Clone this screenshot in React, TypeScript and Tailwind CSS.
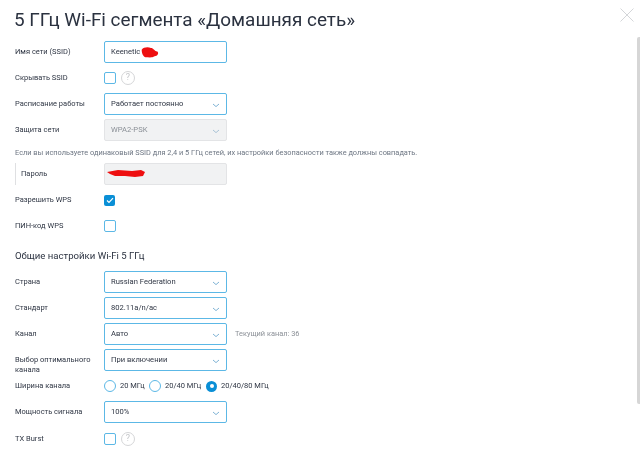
import React from "react";

const Label = ({ children, top }: { children: React.ReactNode; top?: boolean }) => (
  <div className={`w-[89px] shrink-0 text-[7.5px] leading-[10px] text-[#2f3644] ${top ? "self-start pt-[6px]" : ""}`}>{children}</div>
);

const Row = ({ label, children, top }: { label: React.ReactNode; children: React.ReactNode; top?: boolean }) => (
  <div className="flex h-[22px] items-center">
    <Label top={top}>{label}</Label>
    {children}
  </div>
);

const Chevron = ({ color = "#7fb3d5" }: { color?: string }) => (
  <svg width="8" height="5" viewBox="0 0 8 5" fill="none" className="absolute right-[6px] top-[9px]">
    <path d="M1 1l3 2.6L7 1" stroke={color} strokeWidth="1" />
  </svg>
);

const Select = ({ value, disabled }: { value: string; disabled?: boolean }) =>
  disabled ? (
    <div className="relative flex h-[22px] w-[123px] items-center rounded-[2px] border border-[#e3e4e6] bg-[#f1f2f3] pl-[6px] text-[7.6px] text-[#8b9097]">
      {value}
      <Chevron color="#a9c3d6" />
    </div>
  ) : (
    <div className="relative flex h-[22px] w-[123px] items-center rounded-[2px] border-[1.5px] border-[#5cb8e6] bg-white pl-[6px] text-[7.6px] text-[#2f3644]">
      {value}
      <Chevron />
    </div>
  );

const Box = ({ checked }: { checked?: boolean }) =>
  checked ? (
    <div className="flex h-[11px] w-[11px] items-center justify-center rounded-[2px] bg-[#0a8fd6]">
      <svg width="8" height="7" viewBox="0 0 8 7" fill="none">
        <path d="M1 3.5l2 2L7 1.2" stroke="#fff" strokeWidth="1.2" />
      </svg>
    </div>
  ) : (
    <div className="h-[12px] w-[12px] rounded-[2px] border border-[#5cb8e6] bg-white" />
  );

const Help = () => (
  <div className="ml-[5px] flex h-[14px] w-[14px] items-center justify-center rounded-full border border-[#d5d6d8] text-[9px] text-[#c4c6c9]">?</div>
);

const Radio = ({ label, on, w }: { label: string; on?: boolean; w: string }) => (
  <div className={`flex items-center gap-[4px] ${w}`}>
    {on ? (
      <div className="flex h-[11px] w-[11px] shrink-0 items-center justify-center rounded-full bg-[#0a8fd6]">
        <div className="h-[4px] w-[4px] rounded-full bg-white" />
      </div>
    ) : (
      <div className="h-[12px] w-[12px] shrink-0 rounded-full border border-[#5cb8e6] bg-white" />
    )}
    <span className="text-[7.5px] text-[#2f3644]">{label}</span>
  </div>
);

export default function App() {
  return (
    <div className="relative h-[472px] w-[640px] overflow-hidden bg-white pl-[15px] font-['Roboto',sans-serif] blur-[0.35px]">
      <h1 className="-ml-[1px] pt-[6px] text-[18.9px] leading-[27px] text-[#2b3240]">5 ГГц Wi-Fi сегмента «Домашняя сеть»</h1>

      <svg width="14" height="14" viewBox="0 0 14 14" fill="none" className="absolute left-[620px] top-[8px]">
        <path d="M0.5 0.5l13 13M13.5 0.5l-13 13" stroke="#d4d6d9" strokeWidth="1" />
      </svg>
      <div className="absolute left-[637px] top-[37px] h-[367px] w-[3px] rounded-l-[2px] bg-[#d6d6d6]" />

      <div className="mt-[8px] flex flex-col gap-[4px]">
        <Row label="Имя сети (SSID)">
          <div className="relative flex h-[22px] w-[123px] items-center rounded-[2px] border-[1.5px] border-[#5cb8e6] bg-white pl-[6px] text-[7.6px] text-[#2f3644]">
            Keenetic
            <svg width="20" height="12" viewBox="0 0 20 13" className="absolute left-[35px] top-[5px]">
              <path d="M1 3C3 0 8 0 11 1c3 0 3 3 7 4 2 2 0 5-3 5-3 2-7 1-10 1-3-1-4-5-4-8z" fill="#ee0f10" />
            </svg>
          </div>
        </Row>
        <Row label="Скрывать SSID">
          <Box />
          <Help />
        </Row>
        <Row label="Расписание работы">
          <Select value="Работает постоянно" />
        </Row>
        <Row label="Защита сети">
          <Select value="WPA2-PSK" disabled />
        </Row>
      </div>

      <p className="mt-[6px] h-[11px] text-[7.4px] leading-[11px] text-[#6d7683]">
        Если вы используете одинаковый SSID для 2,4 и 5 ГГц сетей, их настройки безопасности также должны совпадать.
      </p>

      <div className="mt-[5px] flex h-[22px] items-center border-l border-[#dfe0e2]">
        <div className="w-[88px] shrink-0 pl-[5px] text-[7.5px] text-[#2f3644]">Пароль</div>
        <div className="relative h-[22px] w-[123px] rounded-[2px] border border-[#e3e4e6] bg-[#f1f2f3]">
          <svg width="40" height="10" viewBox="0 0 40 10" className="absolute left-[1px] top-[5px]">
            <path d="M1 3L12 1l14 1 9-1 4 2-2 4-8 1-10-1-10 0L4 5z" fill="#ee0f10" />
          </svg>
        </div>
      </div>

      <div className="mt-[4px] flex flex-col gap-[4px]">
        <Row label="Разрешить WPS">
          <Box checked />
        </Row>
        <Row label="ПИН-код WPS">
          <Box />
        </Row>
      </div>

      <h2 className="mt-[12px] h-[22px] text-[9.6px] leading-[14px] text-[#2b3240]">Общие настройки Wi-Fi 5 ГГц</h2>

      <div className="flex flex-col gap-[4px]">
        <Row label="Страна">
          <Select value="Russian Federation" />
        </Row>
        <Row label="Стандарт">
          <Select value="802.11a/n/ac" />
        </Row>
        <Row label="Канал">
          <Select value="Авто" />
          <span className="ml-[8px] text-[7.4px] text-[#8b9097]">Текущий канал: 36</span>
        </Row>
        <Row top label={<>Выбор оптимального<br />канала</>}>
          <Select value="При включении" />
        </Row>
        <Row label="Ширина канала">
          <div className="flex items-center">
            <Radio w="w-[45px]" label="20 МГц" />
            <Radio w="w-[57px]" label="20/40 МГц" />
            <Radio w="w-[70px]" label="20/40/80 МГц" on />
          </div>
        </Row>
        <Row label="Мощность сигнала">
          <Select value="100%" />
        </Row>
        <div className="mt-[1px]">
          <Row label="TX Burst">
            <Box />
            <Help />
          </Row>
        </div>
      </div>
    </div>
  );
}
